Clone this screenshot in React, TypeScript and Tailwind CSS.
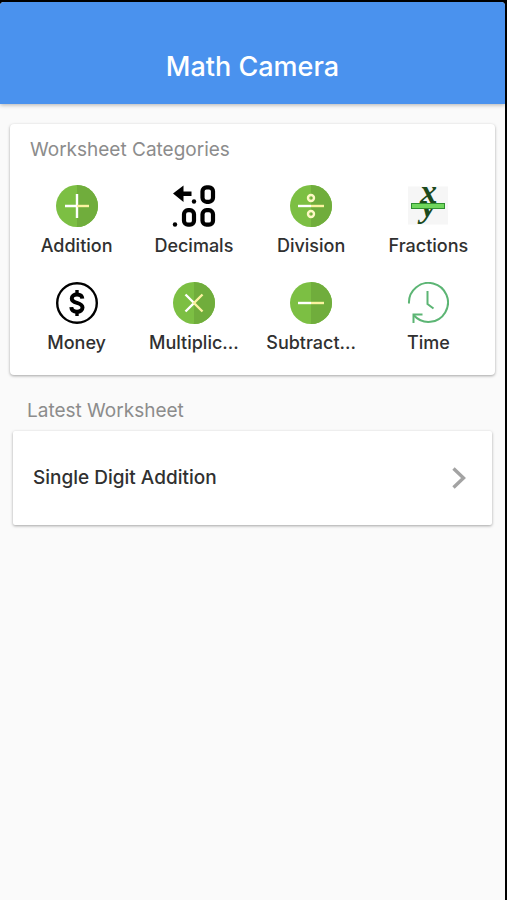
import React from 'react';

const GreenDisc = ({ children }: { children: React.ReactNode }) => (
  <svg viewBox="0 0 42 42" className="h-[42px] w-[42px]" aria-hidden="true">
    <circle cx="21" cy="21" r="21" fill="#7cbf43" />
    <path d="M21 0a21 21 0 0 1 0 42z" fill="#70ad3c" />
    {children}
  </svg>
);

const AdditionIcon = () => (
  <GreenDisc>
    <path d="M9 21h12M21 9v24" stroke="#ffffff" strokeWidth="2.4" />
    <path d="M21 21h12" stroke="#fbf3a0" strokeWidth="2.4" />
  </GreenDisc>
);

const DivisionIcon = () => (
  <GreenDisc>
    <path d="M8 21h13" stroke="#ffffff" strokeWidth="2.4" />
    <path d="M21 21h13" stroke="#fbf3a0" strokeWidth="2.4" />
    <g fill="none" stroke="#fdf8c4" strokeWidth="2.4">
      <circle cx="21" cy="13" r="3" />
      <circle cx="21" cy="29" r="3" />
    </g>
  </GreenDisc>
);

const MultiplicationIcon = () => (
  <GreenDisc>
    <path d="M12.5 12.5L21 21l-8.5 8.5" fill="none" stroke="#ffffff" strokeWidth="2.4" />
    <path d="M29.5 12.5L21 21l8.5 8.5" fill="none" stroke="#fbf3a0" strokeWidth="2.4" />
  </GreenDisc>
);

const SubtractionIcon = () => (
  <GreenDisc>
    <path d="M8 21h13" stroke="#ffffff" strokeWidth="2.4" />
    <path d="M21 21h13" stroke="#fbf3a0" strokeWidth="2.4" />
  </GreenDisc>
);

const DecimalsIcon = () => (
  <svg viewBox="0 0 44 42" className="h-[42px] w-[44px]" aria-hidden="true">
    <path d="M1 8.5L11.5 0.5v6h8v4.500h-8v6z" />
    <circle cx="22" cy="16.5" r="2.2" />
    <circle cx="3" cy="39.5" r="2.2" />
    <g fill="none" stroke="#000000" strokeWidth="4.2">
      <rect x="30.5" y="2.3" width="10.5" height="14.5" rx="4" />
      <rect x="12" y="25.2" width="10" height="14.5" rx="4" />
      <rect x="30.5" y="25.2" width="10.5" height="14.5" rx="4" />
    </g>
  </svg>
);

const FractionsIcon = () => (
  <svg viewBox="0 0 42 42" className="h-[42px] w-[42px] overflow-visible" aria-hidden="true">
    <rect x="1" y="1.5" width="40" height="38" fill="#f6f6f6" />
    <g
      fill="#1c4a1c"
      textAnchor="middle"
      fontFamily="'Liberation Serif', serif"
      fontStyle="italic"
      fontWeight="700"
      fontSize="34"
    >
      <text x="21.5" y="18">x</text>
      <text x="21.5" y="32">y</text>
    </g>
    <rect x="4.5" y="18.5" width="33" height="5" fill="#6fd65c" stroke="#2f8f2f" />
  </svg>
);

const MoneyIcon = () => (
  <svg viewBox="0 0 42 42" className="h-[42px] w-[42px]" aria-hidden="true">
    <circle cx="21" cy="21" r="19.8" fill="none" stroke="#000000" strokeWidth="2.4" />
    <g fill="none" stroke="#000000">
      <path
        d="M26.3 16.7c-.2-2.8-2.3-4.2-5.3-4.2-3.1 0-5.2 1.5-5.2 4 0 2.7 2.4 3.6 5.2 4.4 3.2.9 5.500 1.900 5.500 4.700 0 2.500-2.200 4.100-5.500 4.100-3.400 0-5.500-1.600-5.700-4.500"
        strokeWidth="4"
      />
      <path d="M21 8v4.5M21 29.5V34" strokeWidth="3.4" />
    </g>
  </svg>
);

const TimeIcon = () => (
  <svg
    viewBox="0 0 42 42"
    className="h-[42px] w-[42px]"
    fill="none"
    stroke="#5cb574"
    strokeWidth="2"
    aria-hidden="true"
  >
    <path d="M2 21.5A19.5 19.5 0 1 1 7 33.5" />
    <path d="M6.500 41v-8.500H15.500" />
    <path d="M20.500 9v13l6 4.500" />
  </svg>
);

const categories = [
  { name: 'Addition', icon: AdditionIcon },
  { name: 'Decimals', icon: DecimalsIcon },
  { name: 'Division', icon: DivisionIcon },
  { name: 'Fractions', icon: FractionsIcon },
  { name: 'Money', icon: MoneyIcon },
  { name: 'Multiplic...', icon: MultiplicationIcon },
  { name: 'Subtract...', icon: SubtractionIcon },
  { name: 'Time', icon: TimeIcon },
];

const App = () => {
  return (
    <div className="min-h-screen border-t-2 border-r-2 border-black bg-black font-['Inter',sans-serif]">
      <div className="flex min-h-[calc(100vh-2px)] flex-col rounded-t bg-[#fafafa]">
        <header className="rounded-t bg-[#4a92ee] pt-12 pb-5 shadow-[0_1px_4px_rgba(0,0,0,0.3)]">
          <h1 className="text-center text-[27px] leading-[34px] font-medium text-white">Math Camera</h1>
        </header>

        <main className="px-[10px] pt-5">
          <section className="rounded bg-white px-2 pt-[14px] pb-5 shadow-[0_1px_3px_rgba(0,0,0,0.35)]">
            <h2 className="px-3 text-[19px] leading-6 text-[#8c8c8c]">Worksheet Categories</h2>
            <div className="mt-[23px] grid grid-cols-4 gap-y-6">
              {categories.map(({ name, icon: Icon }) => (
                <button key={name} className="flex min-w-0 cursor-pointer flex-col items-center gap-[7px]">
                  <Icon />
                  <span className="text-[18px] leading-6 font-medium text-[#303030]">{name}</span>
                </button>
              ))}
            </div>
          </section>

          <section className="px-[3px] pt-6">
            <h2 className="px-[14px] text-[19px] leading-6 text-[#8c8c8c]">Latest Worksheet</h2>
            <a
              href="#single-digit-addition"
              className="mt-2 flex items-center justify-between rounded-xs bg-white py-[35px] pr-[26px] pl-5 shadow-[0_1px_3px_rgba(0,0,0,0.35)]"
            >
              <span className="text-[19px] leading-6 font-medium text-[#303030]">Single Digit Addition</span>
              <svg
                viewBox="0 0 14 22"
                className="h-[22px] w-[14px]"
                fill="none"
                stroke="#a3a3a3"
                strokeWidth="3.4"
                aria-hidden="true"
              >
                <path d="M1.5 1.5L11.5 11l-10 9.5" />
              </svg>
            </a>
          </section>
        </main>
      </div>
    </div>
  );
};

export default App;
